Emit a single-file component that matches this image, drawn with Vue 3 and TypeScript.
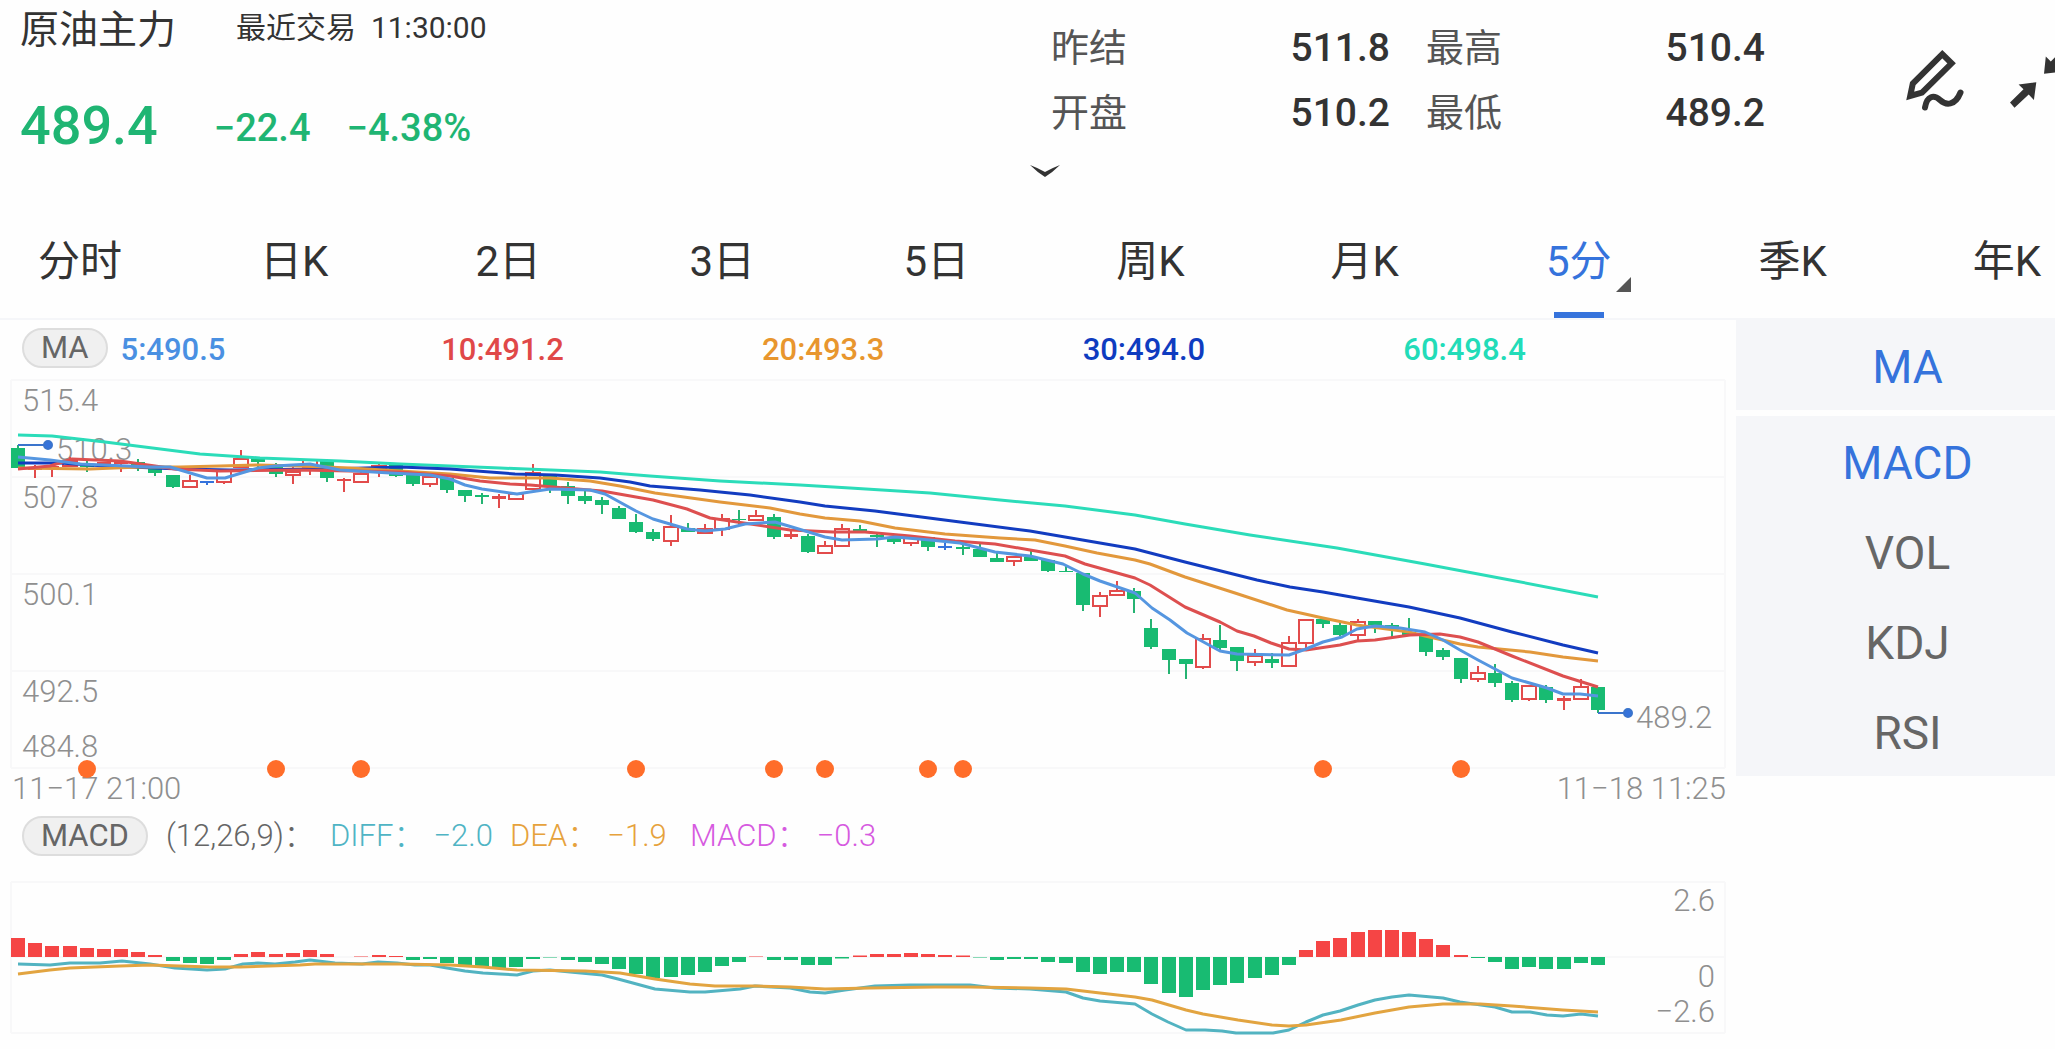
<script setup lang="ts">
import { ref } from 'vue'

type Kind = 'up' | 'down' | 'flat'
type Row = [Kind, number, number, number, number]
type Point = [number, number]

const tabs = ['分时', '日K', '2日', '3日', '5日', '周K', '月K', '5分', '季K', '年K']
const activeTab = ref('5分')
const subIndicators = ['MACD', 'VOL', 'KDJ', 'RSI']
const activeSub = ref('MACD')

const stats = [
  { label: '昨结', value: '511.8' },
  { label: '最高', value: '510.4' },
  { label: '开盘', value: '510.2' },
  { label: '最低', value: '489.2' },
]

const averages = [
  { text: '5:490.5', color: '#4a90e2' },
  { text: '10:491.2', color: '#e04848' },
  { text: '20:493.3', color: '#e8962e' },
  { text: '30:494.0', color: '#0f3cc0' },
  { text: '60:498.4', color: '#22dcb8' },
]

const macdValues = [
  { name: 'DIFF：', value: '−2.0', color: '#4fb4c4' },
  { name: 'DEA：', value: '−1.9', color: '#e6a23c' },
  { name: 'MACD：', value: '−0.3', color: '#d65ae0' },
]

const first = 18
const step = 1580 / 92
const xAt = (i: number) => Math.round(first + i * step)

// kind, body top, body bottom, high, low
const rows: Row[] = [
  ['down', 448, 468, 445, 468], ['up', 468, 470, 465, 478], ['up', 466, 468, 463, 477], ['up', 460, 467, 457, 467],
  ['down', 464, 467, 460, 472], ['up', 462, 464, 462, 467], ['up', 461, 464, 461, 472], ['down', 462, 468, 459, 471],
  ['down', 469, 473, 469, 476], ['down', 475, 487, 475, 488], ['up', 480, 488, 475, 488], ['flat', 481, 483, 481, 485],
  ['up', 470, 483, 470, 484], ['up', 458, 468, 450, 468], ['down', 458, 462, 457, 469], ['down', 465, 474, 463, 477],
  ['up', 471, 476, 465, 484], ['up', 459, 469, 459, 475], ['down', 460, 478, 460, 482], ['up', 479, 481, 478, 492],
  ['up', 473, 483, 470, 483], ['up', 465, 473, 464, 477], ['down', 465, 476, 465, 477], ['down', 475, 484, 474, 486],
  ['up', 476, 485, 476, 487], ['down', 478, 490, 478, 493], ['down', 490, 496, 490, 502], ['down', 495, 497, 493, 504],
  ['up', 496, 499, 494, 508], ['up', 493, 500, 493, 500], ['up', 472, 490, 464, 490], ['down', 474, 486, 474, 493],
  ['down', 486, 496, 482, 504], ['down', 496, 501, 491, 504], ['down', 500, 505, 497, 514], ['down', 508, 519, 506, 519],
  ['down', 522, 532, 514, 533], ['down', 532, 539, 529, 541], ['up', 526, 542, 515, 546], ['down', 528, 532, 523, 532],
  ['up', 528, 534, 524, 534], ['up', 518, 530, 514, 536], ['down', 519, 520, 510, 525], ['up', 515, 521, 510, 521],
  ['down', 517, 537, 514, 539], ['up', 534, 537, 531, 539], ['down', 536, 552, 534, 553], ['up', 545, 554, 541, 554],
  ['up', 528, 547, 524, 547], ['down', 529, 531, 525, 533], ['down', 535, 537, 533, 547], ['down', 537, 542, 537, 544],
  ['up', 537, 544, 537, 546], ['down', 537, 547, 537, 551], ['flat', 546, 548, 543, 550], ['down', 547, 549, 545, 555],
  ['down', 549, 557, 543, 557], ['down', 558, 562, 553, 562], ['up', 556, 562, 556, 566], ['down', 557, 561, 551, 561],
  ['down', 560, 571, 560, 572], ['down', 571, 572, 565, 572], ['down', 573, 605, 573, 611], ['up', 595, 607, 592, 617],
  ['up', 590, 596, 581, 596], ['down', 591, 599, 588, 613], ['down', 628, 647, 619, 649], ['down', 649, 660, 649, 674],
  ['down', 659, 664, 659, 679], ['up', 638, 668, 634, 669], ['down', 640, 648, 625, 650], ['down', 647, 661, 647, 671],
  ['up', 655, 663, 649, 666], ['down', 659, 663, 653, 668], ['up', 642, 667, 636, 667], ['up', 619, 644, 619, 648],
  ['down', 619, 624, 619, 628], ['down', 625, 635, 623, 636], ['up', 621, 636, 619, 640], ['down', 621, 625, 621, 633],
  ['down', 625, 628, 623, 637], ['down', 632, 635, 618, 635], ['down', 635, 652, 635, 656], ['down', 650, 657, 648, 660],
  ['down', 658, 679, 658, 683], ['up', 672, 680, 666, 682], ['down', 673, 683, 664, 687], ['down', 683, 700, 681, 702],
  ['up', 685, 700, 685, 701], ['down', 687, 700, 685, 703], ['up', 698, 701, 696, 710], ['up', 686, 700, 679, 700],
  ['down', 687, 710, 687, 713],
]

const candles = rows.map(([kind, top, bottom, high, low], i) => ({
  kind, top, bottom, high, low,
  x: xAt(i),
  hollow: kind === 'up' && bottom - top > 4,
}))

const lines: { color: string; points: Point[] }[] = [
  {
    color: '#2bdcb9',
    points: [[18, 435], [52, 436], [105, 442], [200, 454], [260, 458], [340, 461], [400, 464], [450, 466], [500, 468], [600, 472], [650, 476], [720, 481], [800, 485], [850, 488], [930, 493], [1000, 500], [1065, 506], [1135, 515], [1185, 524], [1250, 535], [1337, 548], [1425, 564], [1510, 580], [1598, 597]],
  },
  {
    color: '#123cc0',
    points: [[18, 463], [60, 463], [105, 466], [180, 469], [230, 470], [330, 469], [400, 467], [450, 469], [515, 474], [555, 475], [600, 478], [630, 482], [650, 486], [700, 490], [750, 495], [800, 502], [825, 506], [875, 511], [960, 522], [1030, 531], [1065, 537], [1100, 543], [1135, 549], [1185, 562], [1257, 580], [1290, 587], [1323, 592], [1357, 598], [1409, 607], [1460, 618], [1512, 632], [1563, 645], [1598, 653]],
  },
  {
    color: '#e2983c',
    points: [[18, 468], [90, 469], [140, 467], [180, 467], [220, 466], [258, 465], [300, 466], [350, 468], [400, 471], [450, 474], [490, 478], [550, 478], [590, 481], [620, 486], [655, 493], [720, 502], [770, 508], [800, 514], [825, 518], [860, 521], [895, 528], [945, 534], [1000, 538], [1035, 540], [1065, 546], [1097, 553], [1135, 560], [1150, 564], [1185, 577], [1235, 593], [1287, 610], [1323, 618], [1357, 625], [1409, 632], [1425, 636], [1460, 644], [1478, 647], [1510, 650], [1530, 652], [1563, 657], [1598, 661]],
  },
  {
    color: '#dd4f4f',
    points: [[18, 469], [50, 466], [72, 459], [120, 461], [155, 466], [175, 469], [220, 471], [300, 470], [350, 471], [400, 472], [450, 476], [480, 481], [510, 484], [530, 485], [565, 488], [602, 491], [653, 500], [687, 509], [710, 518], [737, 522], [790, 530], [833, 532], [865, 532], [910, 536], [955, 541], [995, 544], [1030, 550], [1065, 556], [1085, 564], [1135, 578], [1150, 585], [1185, 607], [1220, 622], [1237, 631], [1254, 636], [1271, 643], [1289, 649], [1306, 650], [1340, 645], [1357, 641], [1375, 640], [1410, 635], [1440, 634], [1460, 637], [1478, 642], [1512, 656], [1563, 676], [1598, 687]],
  },
  {
    color: '#5596e0',
    points: [[18, 457], [50, 460], [80, 464], [150, 467], [170, 467], [207, 478], [225, 478], [258, 468], [275, 466], [310, 464], [340, 470], [390, 473], [430, 475], [450, 479], [465, 485], [482, 489], [517, 494], [530, 492], [550, 489], [590, 490], [605, 494], [636, 511], [653, 519], [687, 529], [705, 531], [725, 529], [745, 524], [775, 522], [792, 527], [825, 537], [842, 540], [877, 539], [895, 537], [930, 540], [960, 543], [995, 552], [1030, 556], [1063, 564], [1083, 574], [1100, 581], [1135, 593], [1152, 608], [1170, 620], [1187, 633], [1220, 651], [1237, 654], [1289, 655], [1306, 649], [1323, 642], [1342, 637], [1357, 629], [1375, 626], [1400, 628], [1425, 632], [1443, 640], [1460, 650], [1478, 660], [1495, 669], [1512, 678], [1547, 688], [1563, 694], [1580, 694], [1598, 696]],
  },
]

const toPoints = (points: Point[]) => points.map((p) => p.join(',')).join(' ')

const gridRows = [380, 477, 574, 671, 768]
const priceLabels = [
  { text: '515.4', y: 411 },
  { text: '507.8', y: 508 },
  { text: '500.1', y: 605 },
  { text: '492.5', y: 702 },
  { text: '484.8', y: 757 },
]
const markers = [4, 15, 20, 36, 44, 47, 53, 55, 76, 84].map(xAt)

// signed bar heights around the zero line
const zero = 957
const heights = [
  19, 14, 11, 11, 9, 8, 8, 5, 2, -4, -6, -7, -3, 3, 5, 3, 4, 7, 3, 0, 0.5, 2, 1, -3, -2, -6, -9, -10, -11, -10, -2,
  -0.5, -3, -5, -7, -12, -17, -21, -20, -18, -15, -9, -5, 0.5, -3, -3, -8, -8, -1.5, 1.5, 3, 3, 4, 3, 2, 1.5, -0.5,
  -3, -2, -2, -5, -6, -15, -17, -15, -15, -27, -36, -40, -33, -28, -26, -21, -18, -8, 7, 16, 19, 25, 27, 27, 25, 18,
  12, 2, -1, -5, -12, -10, -12, -12, -6, -8,
]
const bars = heights.map((h, i) => ({
  x: xAt(i) - 7,
  y: h > 0 ? zero - h : zero,
  height: Math.abs(h),
  color: h > 0 ? '#f54545' : '#18bb72',
}))

const diff: Point[] = [[18, 964], [50, 965], [70, 963], [100, 963], [122, 961], [150, 964], [175, 968], [207, 970], [225, 969], [243, 964], [258, 963], [275, 964], [295, 962], [310, 960], [335, 963], [362, 964], [378, 962], [397, 963], [415, 965], [430, 965], [447, 968], [465, 971], [483, 973], [500, 974], [517, 975], [533, 971], [550, 970], [570, 972], [602, 975], [618, 979], [655, 989], [690, 992], [705, 992], [740, 989], [755, 986], [790, 988], [810, 992], [825, 993], [845, 990], [875, 986], [910, 985], [970, 985], [995, 988], [1030, 989], [1066, 992], [1083, 998], [1100, 1001], [1135, 1004], [1152, 1014], [1168, 1022], [1186, 1030], [1205, 1030], [1222, 1031], [1236, 1033], [1273, 1033], [1289, 1030], [1306, 1022], [1323, 1015], [1340, 1011], [1358, 1005], [1375, 1000], [1392, 997], [1409, 995], [1443, 998], [1460, 1002], [1495, 1007], [1512, 1012], [1530, 1012], [1547, 1015], [1563, 1016], [1581, 1014], [1598, 1016]]
const dea: Point[] = [[18, 974], [50, 970], [70, 968], [120, 966], [150, 965], [180, 966], [210, 967], [240, 967], [300, 965], [315, 964], [400, 964], [450, 965], [483, 967], [517, 970], [585, 971], [620, 973], [655, 979], [690, 984], [715, 986], [757, 986], [790, 987], [825, 989], [870, 988], [935, 987], [970, 987], [1030, 988], [1066, 989], [1100, 993], [1135, 997], [1152, 1000], [1186, 1010], [1203, 1014], [1238, 1020], [1272, 1025], [1289, 1026], [1306, 1025], [1341, 1020], [1375, 1013], [1409, 1007], [1443, 1004], [1480, 1004], [1512, 1006], [1563, 1010], [1598, 1012]]
</script>

<template>
  <main class="page">
    <header class="header">
      <div class="quote">
        <div class="title-row">
          <h1 class="title">原油主力</h1>
          <span class="time">最近交易&nbsp; 11:30:00</span>
        </div>
        <div class="price-row">
          <strong class="price">489.4</strong>
          <span class="change">−22.4</span>
          <span class="change">−4.38%</span>
        </div>
      </div>
      <dl class="stats">
        <div v-for="s in stats" :key="s.label" class="stat">
          <dt>{{ s.label }}</dt>
          <dd>{{ s.value }}</dd>
        </div>
      </dl>
      <div class="tools">
        <button type="button" aria-label="画线">
          <svg width="64" height="68" viewBox="24 16 64 68" fill="none" stroke="#333" stroke-width="6">
            <path d="M62.3 24.2 71.6 33.3 42 62.6 30.2 66 32.8 53.6Z" />
            <path d="M45 77.5C47 65.500 54 64.500 60 70S75 76 80.500 62.500" stroke-width="6" stroke-linecap="round" />
          </svg>
        </button>
        <button type="button" aria-label="退出全屏">
          <svg width="64" height="68" viewBox="126 16 64 68" fill="#333">
            <path d="M156.300 52.200 138.600 54.500 143.500 59.300 130 72.500 134.500 77.800 148.700 64.500 153.900 70Z" />
            <path d="M164 43.700 165.800 26.500 170.800 31.500 184 18 189 23 175.800 36.500 181 41.700Z" />
          </svg>
        </button>
      </div>
    </header>

    <div class="expand">
      <button type="button" aria-label="展开">
        <svg width="32" height="14" viewBox="0 0 32 14"><path d="M1 1Q9 4 16 8Q23 4 31 1Q24 8 16 13Q8 8 1 1Z" fill="#333" /></svg>
      </button>
    </div>

    <div class="tabs-clip">
      <nav class="tabs">
        <button
          v-for="tab in tabs"
          :key="tab"
          type="button"
          class="tab"
          :class="{ active: tab === activeTab }"
          @click="activeTab = tab"
        >{{ tab }}</button>
      </nav>
    </div>

    <div class="body">
      <section class="charts">
        <div class="legend">
          <button type="button" class="pill">MA</button>
          <ul class="averages">
            <li v-for="a in averages" :key="a.text" :style="{ color: a.color }">{{ a.text }}</li>
          </ul>
        </div>

        <svg class="chart" viewBox="0 376 1736 430">
          <g class="grid">
            <line v-for="y in gridRows" :key="y" x1="11" x2="1725" :y1="y" :y2="y" />
            <path d="M11 380V768M1725 380V768" />
          </g>
          <g class="labels">
            <text v-for="l in priceLabels" :key="l.text" x="22" :y="l.y">{{ l.text }}</text>
            <text x="56" y="460">510.3</text>
            <text x="1636" y="728">489.2</text>
            <text x="12" y="799">11−17 21:00</text>
            <text x="1726" y="799" text-anchor="end">11−18 11:25</text>
          </g>
          <g v-for="(c, i) in candles" :key="i" :class="c.kind">
            <template v-if="c.hollow">
              <path :d="`M${c.x} ${c.high}V${c.top}M${c.x} ${c.bottom}V${c.low}`" />
              <rect :x="c.x - 7" :y="c.top + 1" width="14" :height="c.bottom - c.top - 2" fill="none" />
            </template>
            <template v-else>
              <path :d="`M${c.x} ${c.high}V${c.low}`" />
              <rect class="solid" :x="c.x - 7" :y="c.top" width="14" :height="c.bottom - c.top" />
            </template>
          </g>
          <polyline v-for="l in lines" :key="l.color" class="line" :points="toPoints(l.points)" :stroke="l.color" />
          <g class="pointer">
            <path d="M18 445H48M1598 713H1628" />
            <circle cx="48" cy="445" r="4" />
            <circle cx="1628" cy="713" r="4" />
          </g>
          <circle v-for="x in markers" :key="x" :cx="x" cy="769" r="9" fill="#ff6d2a" />
        </svg>

        <div class="legend macd-legend">
          <button type="button" class="pill">MACD</button>
          <span class="params">(12,26,9)：</span>
          <span v-for="m in macdValues" :key="m.name" class="macd-value" :style="{ color: m.color }">
            <span>{{ m.name }}</span><span>{{ m.value }}</span>
          </span>
        </div>

        <svg class="chart" viewBox="0 866 1736 174">
          <g class="grid">
            <path d="M11 882H1725M11 957H1725M11 1033H1725M11 882V1033M1725 882V1033" />
          </g>
          <rect v-for="(b, i) in bars" :key="i" :x="b.x" :y="b.y" width="14" :height="b.height" :fill="b.color" />
          <polyline class="line" :points="toPoints(diff)" stroke="#52b3c1" />
          <polyline class="line" :points="toPoints(dea)" stroke="#e2a440" />
          <g class="labels" text-anchor="end">
            <text x="1715" y="911">2.6</text>
            <text x="1715" y="987">0</text>
            <text x="1715" y="1022">−2.6</text>
          </g>
        </svg>
      </section>

      <aside class="side">
        <div class="group">
          <button type="button" class="indicator active">MA</button>
        </div>
        <div class="group">
          <button
            v-for="name in subIndicators"
            :key="name"
            type="button"
            class="indicator"
            :class="{ active: name === activeSub }"
            @click="activeSub = name"
          >{{ name }}</button>
        </div>
      </aside>
    </div>
  </main>
</template>

<style>
body {
  margin: 0;
  background: #fefefe;
}
</style>

<style scoped>
.page {
  font-family: Roboto, 'Noto Sans CJK SC', sans-serif;
  font-weight: 400;
  color: #333;
  overflow: hidden;
}
button {
  font: inherit;
  color: inherit;
  background: none;
  border: 0;
  padding: 0;
  cursor: pointer;
}
svg {
  display: block;
}
.header {
  display: flex;
  height: 160px;
  margin-right: -15px;
}
.quote {
  flex: 1;
  padding-left: 20px;
  white-space: nowrap;
}
.title-row {
  display: flex;
  align-items: center;
  gap: 60px;
  height: 60px;
}
.title {
  margin: 0;
  font-size: 39px;
  font-weight: 400;
  line-height: 60px;
}
.time {
  font-size: 30px;
  line-height: 30px;
  padding-bottom: 4px;
}
.price-row {
  display: flex;
  align-items: center;
  gap: 36px;
  margin-top: 32px;
  color: #1fb573;
  line-height: 64px;
}
.price {
  font-size: 54px;
  font-weight: 500;
  margin-right: 20px;
}
.change {
  font-size: 38px;
  font-weight: 500;
  padding-top: 4px;
}
.stats {
  display: grid;
  grid-template-columns: 339px 339px;
  column-gap: 36px;
  grid-auto-rows: 65px;
  margin: 16px 0 0;
}
.stat {
  display: flex;
  justify-content: space-between;
  line-height: 64px;
}
.stat dt {
  font-size: 38px;
  color: #555;
}
.stat dd {
  margin: 0;
  font-size: 39px;
  font-weight: 500;
}
.tools {
  display: flex;
  align-items: flex-start;
  gap: 38px;
  padding-top: 46px;
  margin-left: 139px;
}
.expand {
  display: flex;
  justify-content: center;
  padding: 4px 0 36px 35px;
}
.tabs-clip {
  overflow: hidden;
  border-bottom: 2px solid #f5f6f9;
}
.tabs {
  display: flex;
  margin: 0 -59px 0 -27px;
}
.tab {
  position: relative;
  flex: 1;
  height: 104px;
  padding-bottom: 8px;
  font-size: 42px;
  line-height: 96px;
}
.tab.active {
  color: #3573dc;
}
.tab.active::before {
  content: '';
  position: absolute;
  left: 50%;
  bottom: 0;
  width: 50px;
  height: 6px;
  margin-left: -25px;
  background: #3573dc;
}
.tab.active::after {
  content: '';
  position: absolute;
  left: 50%;
  bottom: 26px;
  margin-left: 37px;
  border-left: 15px solid transparent;
  border-bottom: 15px solid #555;
}
.body {
  display: flex;
  align-items: flex-start;
}
.charts {
  flex: 1;
  min-width: 0;
}
.legend {
  display: flex;
  align-items: center;
  height: 56px;
  padding: 0 12px 0 22px;
  font-size: 31px;
  line-height: 36px;
  white-space: nowrap;
  color: #666;
  font-weight: 300;
}
.macd-legend {
  height: 60px;
}
.pill {
  box-sizing: border-box;
  height: 40px;
  padding: 0 17px;
  border: 2px solid #ddd;
  border-radius: 20px;
  background: #f0f0f0;
  font-weight: 400;
}
.averages {
  display: flex;
  flex: 1;
  margin: 0 0 0 13px;
  padding: 4px 0 0;
  list-style: none;
  font-weight: 500;
}
.averages li {
  flex: 1;
}
.params {
  width: 164px;
  margin-left: 18px;
}
.macd-value {
  display: flex;
  gap: 9px;
  min-width: 180px;
}
.chart {
  width: 100%;
  height: auto;
}
.grid {
  stroke: #f8f8f9;
  stroke-width: 2;
  fill: none;
}
.labels {
  font-size: 31px;
  font-weight: 300;
  fill: #8f8f8f;
}
.up,
.down,
.flat {
  stroke-width: 2;
}
.up {
  stroke: #e24b4b;
}
.down {
  stroke: #25b372;
}
.flat {
  stroke: #3573dc;
}
.solid {
  stroke: none;
}
.up .solid {
  fill: #e24b4b;
}
.down .solid {
  fill: #18bb72;
}
.flat .solid {
  fill: #3573dc;
}
.line {
  fill: none;
  stroke-width: 3;
  stroke-linejoin: round;
}
.pointer {
  fill: #3573dc;
  stroke: #3a74cc;
  stroke-width: 2;
}
.side {
  width: 319px;
  display: flex;
  flex-direction: column;
  gap: 6px;
}
.group {
  background: #f5f6f9;
  padding-left: 24px;
}
.indicator {
  display: block;
  width: 100%;
  height: 90px;
  padding-top: 3px;
  font-size: 46px;
  color: #666;
}
.indicator.active {
  color: #3573dc;
}
</style>
